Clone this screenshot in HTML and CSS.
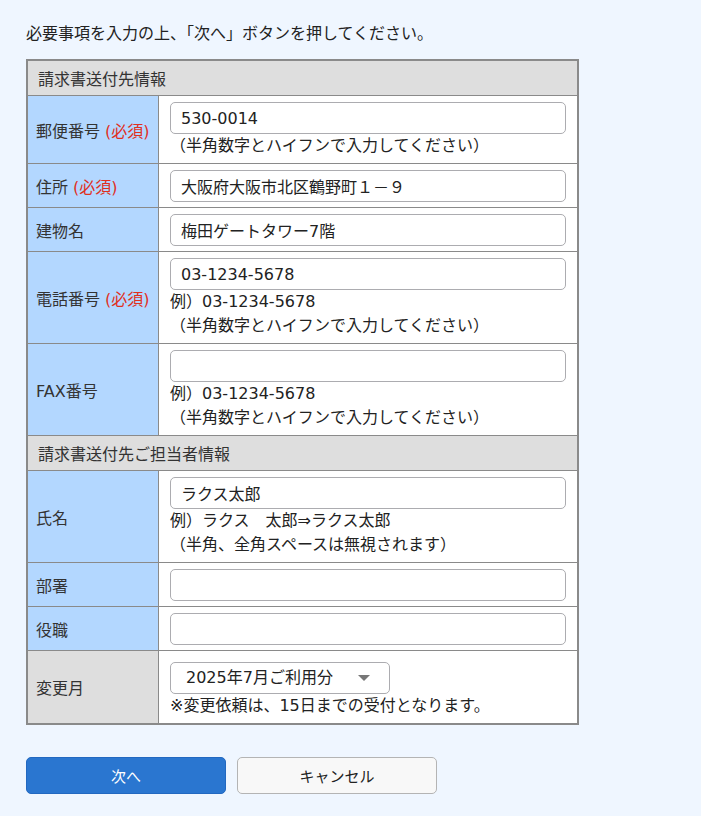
FILE: index.html
```html
<!DOCTYPE html>
<html lang="ja">
<head>
    <meta charset="UTF-8">
    <meta name="viewport" content="width=device-width, initial-scale=1.0">
    <title>請求書送付先変更</title>
    <link rel="stylesheet" href="styles.css">
</head>
<body>

    <div id="container">
        <p class="lead">必要事項を入力の上、「次へ」ボタンを押してください。</p>

        <table class="form-table">
            <tr>
                <th class="section" colspan="2">請求書送付先情報</th>
            </tr>
            <tr>
                <th class="label">郵便番号 <span class="req">(必須)</span></th>
                <td>
                    <input type="text" value="530-0014">
                    <div class="note">（半角数字とハイフンで入力してください）</div>
                </td>
            </tr>
            <tr>
                <th class="label">住所 <span class="req">(必須)</span></th>
                <td><input type="text" value="大阪府大阪市北区鶴野町１－９"></td>
            </tr>
            <tr>
                <th class="label">建物名</th>
                <td><input type="text" value="梅田ゲートタワー7階"></td>
            </tr>
            <tr>
                <th class="label">電話番号 <span class="req">(必須)</span></th>
                <td>
                    <input type="text" value="03-1234-5678">
                    <div class="note">例）03-1234-5678</div>
                    <div class="note">（半角数字とハイフンで入力してください）</div>
                </td>
            </tr>
            <tr>
                <th class="label">FAX番号</th>
                <td>
                    <input type="text" value="">
                    <div class="note">例）03-1234-5678</div>
                    <div class="note">（半角数字とハイフンで入力してください）</div>
                </td>
            </tr>
            <tr>
                <th class="section" colspan="2">請求書送付先ご担当者情報</th>
            </tr>
            <tr>
                <th class="label">氏名</th>
                <td>
                    <input type="text" value="ラクス太郎">
                    <div class="note">例）ラクス　太郎⇒ラクス太郎</div>
                    <div class="note">（半角、全角スペースは無視されます）</div>
                </td>
            </tr>
            <tr>
                <th class="label">部署</th>
                <td><input type="text" value=""></td>
            </tr>
            <tr>
                <th class="label">役職</th>
                <td><input type="text" value=""></td>
            </tr>
            <tr>
                <th class="label grey">変更月</th>
                <td class="month">
                    <div class="select">
                        <span>2025年7月ご利用分</span>
                        <svg width="14" height="8" viewBox="0 0 14 8"><path d="M1 1h12L7 7z" fill="#777"/></svg>
                    </div>
                    <div class="note">※変更依頼は、15日までの受付となります。</div>
                </td>
            </tr>
        </table>

        <div class="buttons">
            <button class="btn primary">次へ</button>
            <button class="btn">キャンセル</button>
        </div>
    </div>

</body>
</html>
```

FILE: styles.css
```css
body {
    font-family: "DejaVu Sans", "Noto Sans CJK JP", sans-serif;
    font-size: 16px;
    color: #333;
    margin: 0;
    padding: 0;
    background-color: #eff6ff;
}

#container {
    padding: 22px 26px 20px;
}

.lead {
    margin: 0 0 13px;
    line-height: 24px;
    color: #222;
}

.form-table {
    width: 553px;
    border-collapse: collapse;
    background-color: white;
    border: 2px solid #8a8a8a;
}

.form-table th,
.form-table td {
    border: 1px solid #8a8a8a;
    font-weight: normal;
    text-align: left;
}

.form-table th.section {
    background-color: #dedede;
    height: 34px;
    padding: 0 10px;
}

.form-table th.label {
    background-color: #b3d7ff;
    width: 122px;
    padding: 0 0 0 8px;
    white-space: nowrap;
}

.form-table th.grey {
    background-color: #dedede;
}

.form-table td {
    padding: 6px 11px 5px 11px;
    line-height: 24px;
}

.form-table td.month {
    padding-top: 11px;
}

.req {
    color: #e0301e;
}

input {
    display: block;
    width: 100%;
    height: 32px;
    box-sizing: border-box;
    padding: 0 10px;
    border: 1.5px solid #acacb0;
    border-radius: 5px;
    font-family: inherit;
    font-size: 16px;
    color: #222;
    background: white;
}

.note {
    line-height: 24px;
    color: #222;
}

.select {
    display: flex;
    align-items: center;
    justify-content: space-between;
    width: 220px;
    height: 32px;
    box-sizing: border-box;
    padding: 0 18px 0 15px;
    border: 1.5px solid #acacb0;
    border-radius: 5px;
    color: #222;
}

.buttons {
    display: flex;
    gap: 11px;
    margin-top: 32px;
}

.btn {
    width: 200px;
    height: 37px;
    font-family: inherit;
    font-size: 15px;
    color: #222;
    background-color: #f8f8f8;
    border: 1.5px solid #b4b4b4;
    border-radius: 5px;
    cursor: pointer;
}

.btn.primary {
    color: white;
    background-color: #2a76d0;
    border-color: #2268c0;
}
```
